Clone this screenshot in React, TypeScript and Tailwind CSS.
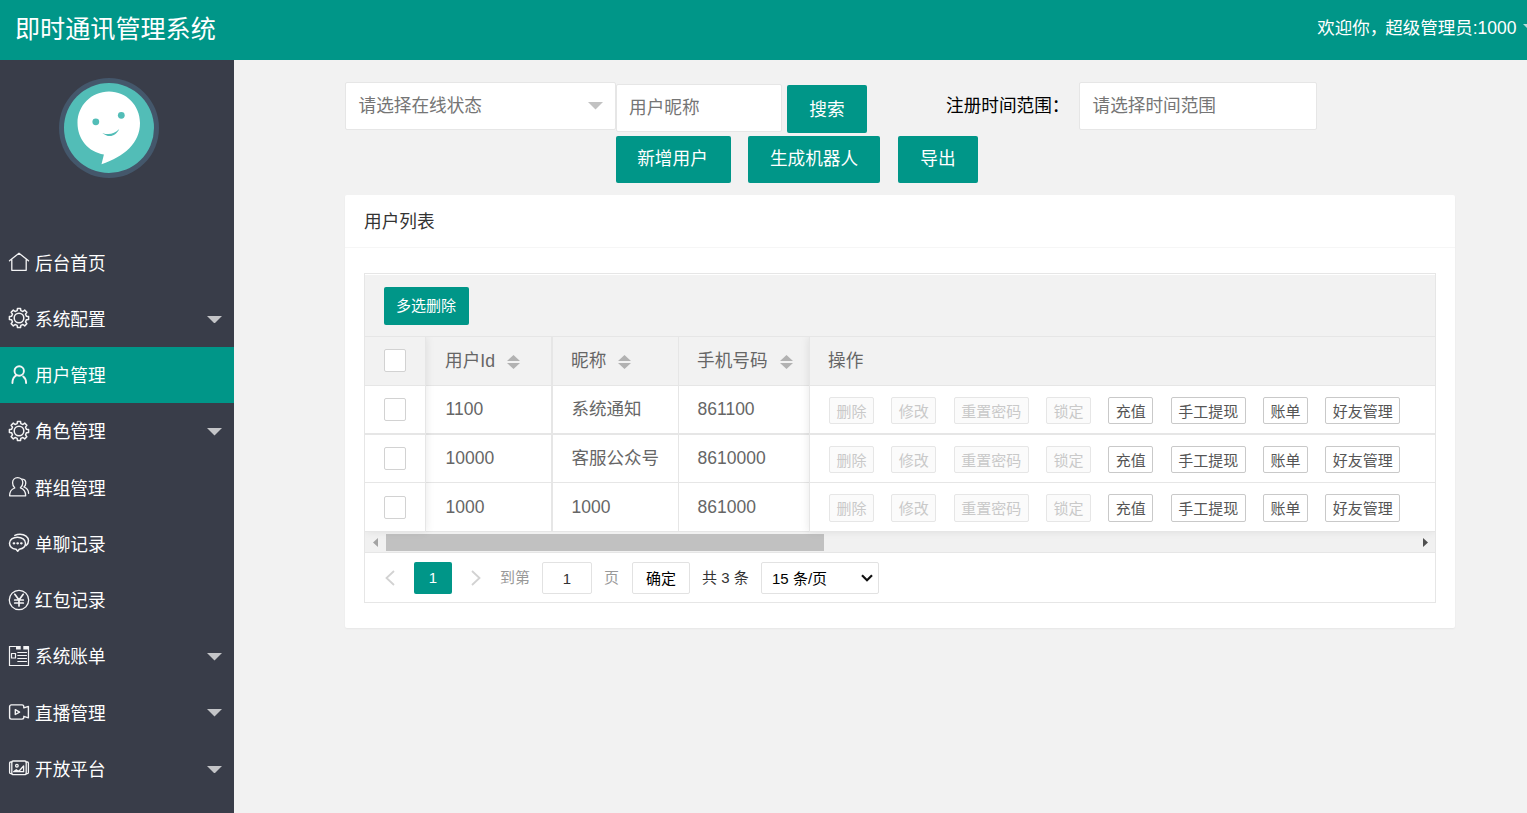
import type { ReactNode } from 'react';
import clsx from 'clsx';

// eight-tooth cog outline around (11, 11)
const gearPath = (() => {
  const points: string[] = [];
  for (let i = 0; i < 8; i++) {
    const steps: [number, number][] = [[-14, 7.6], [-9, 9.7], [9, 9.7], [14, 7.6]];
    steps.forEach(([offset, r]) => {
      const a = ((i * 45 + offset) * Math.PI) / 180;
      points.push(`${(11 + r * Math.sin(a)).toFixed(2)} ${(11 - r * Math.cos(a)).toFixed(2)}`);
    });
  }
  return `M${points.join('L')}Z`;
})();

function Icon({ children, width = 1.3 }: { children: ReactNode; width?: number }) {
  return (
    <svg
      viewBox="0 0 22 22"
      className="mb-px h-[22px] w-[22px] shrink-0"
      fill="none"
      stroke="#f4f4f5"
      strokeWidth={width}
      strokeLinejoin="round"
      strokeLinecap="round"
    >
      {children}
    </svg>
  );
}

const HomeIcon = () => (
  <Icon>
    <path d="M1.5 9.8 11 2.2l9.5 7.6M3.8 8.6v10.7h14.4V8.6" />
  </Icon>
);

const GearIcon = () => (
  <Icon width={1.5}>
    <path d={gearPath} />
    <circle cx="11" cy="11" r="4.8" />
  </Icon>
);

const UserIcon = () => (
  <Icon width={1.9}>
    <circle cx="11.2" cy="7" r="4.7" />
    <path d="M8.6 11.2C5.8 12.7 4.4 15.4 4.4 19M15.2 12.4c1.9 1.4 2.9 3.7 2.9 6.6" />
  </Icon>
);

const GroupIcon = () => (
  <Icon width={1.3}>
    <path d="M1.6 19.8c0-4 1.7-6.6 5.2-7.8C5.2 10.6 4.6 9 4.6 6.8c0-3 2-5.2 5-5.2s5.2 2.2 5.2 5.2c0 2.2-.8 3.8-2.4 5 3.4 1.2 5.3 3.8 5.3 8z" />
    <path d="M14.4 3.2c2.3.2 3.4 1.7 3.4 3.9 0 1.7-.7 3-1.9 3.9 2.8 1 4.6 3 4.7 6.3" />
  </Icon>
);

const ChatIcon = () => (
  <Icon width={1.5}>
    <path d="M9.5 5.2c4.500 0 8 2.600 8 6s-2.600 5.400-6.200 6l-1.600 2-1.600-2C4.200 16.700 1.500 14.400 1.500 11.200c0-3.400 3.500-6 8-6z" />
    <path d="M6.8 3.4c1.600-.8 3.400-1.200 5.200-1.200 4.800 0 8.500 2.800 8.500 6.400 0 2-.8 3.700-2.300 4.900" />
    <path d="M5.700 11.300h.5M9.400 11.300h.5M13.100 11.300h.5" strokeWidth="2.2" />
  </Icon>
);

const YenIcon = () => (
  <Icon width={1.3}>
    <circle cx="11" cy="11" r="9.7" />
    <path d="M6.8 5.3 11 11l4.2-5.7M11 11v6M6.7 11h8.6M6.7 14h8.6" strokeWidth="1.7" />
  </Icon>
);

const BillIcon = () => (
  <Icon width={1.2}>
    <path d="M7.500 1.500H1.500v19h19V1.500" strokeLinejoin="miter" />
    <path d="M8 2.800h4.700M15.300 2.800h5.200" strokeWidth="3.6" strokeLinecap="butt" />
    <path d="M3.500 8.500h4v4.500h-4zM9.800 7.500h8.700M9.800 10.500h8.700M9.800 13.500h8.700M9.800 16.500h8.700" />
  </Icon>
);

const VideoIcon = () => (
  <Icon width={1.4}>
    <path d="M15.8 6.500V5.700c0-1-.8-1.800-1.800-1.800H3.400c-1 0-1.800.8-1.800 1.800v10.600c0 1 .8 1.800 1.800 1.800H14c1 0 1.800-.8 1.800-1.800v-.6M15.800 6.900l4.600-1.500v11.400l-4.600-1.500" />
    <path d="M7.300 8.700v4.800l4.300-2.400z" />
  </Icon>
);

const PictureIcon = () => (
  <Icon width={1.3}>
    <path d="M3.900 5H2.600c-.6 0-1 .4-1 1v9.600c0 .6.400 1 1 1h1.300M18.100 5h1.300c.6 0 1 .4 1 1v9.600c0 .6-.4 1-1 1h-1.300" />
    <rect x="3.8" y="4" width="14.4" height="13.6" rx="1.2" />
    <circle cx="8.9" cy="8.7" r="1.3" />
    <path d="m5.600 14.700 2.700-2 2.400 1.800 4.900-5.500v5.700z" />
  </Icon>
);

type MenuItem = { label: string; icon: () => ReactNode; arrow?: boolean; active?: boolean };

const menu: MenuItem[] = [
  { label: '后台首页', icon: HomeIcon },
  { label: '系统配置', icon: GearIcon, arrow: true },
  { label: '用户管理', icon: UserIcon, active: true },
  { label: '角色管理', icon: GearIcon, arrow: true },
  { label: '群组管理', icon: GroupIcon },
  { label: '单聊记录', icon: ChatIcon },
  { label: '红包记录', icon: YenIcon },
  { label: '系统账单', icon: BillIcon, arrow: true },
  { label: '直播管理', icon: VideoIcon, arrow: true },
  { label: '开放平台', icon: PictureIcon, arrow: true },
];

const users = [
  { id: '1100', nickname: '系统通知', phone: '861100' },
  { id: '10000', nickname: '客服公众号', phone: '8610000' },
  { id: '1000', nickname: '1000', phone: '861000' },
];

// row heights and bottom rules differ by a pixel from row to row
const rowStyles = ['h-[49px] border-b-2', 'h-12 border-b', 'h-[49px] border-b'];

const actions = [
  { label: '删除', disabled: true },
  { label: '修改', disabled: true },
  { label: '重置密码', disabled: true },
  { label: '锁定', disabled: true },
  { label: '充值' },
  { label: '手工提现' },
  { label: '账单' },
  { label: '好友管理' },
];

function Caret({ className }: { className?: string }) {
  return (
    <svg viewBox="0 0 15 7.5" className={clsx('h-[7.5px] w-[15px] shrink-0', className)}>
      <path d="M0 0h15L7.5 7.5z" fill="currentColor" />
    </svg>
  );
}

function SortIcon() {
  return (
    <svg viewBox="0 0 13 14" className="mt-1 ml-3 h-3.5 w-[13px] shrink-0" fill="#b2b2b2">
      <path d="M6.5 0 13 6H0zM6.5 14 13 8H0z" />
    </svg>
  );
}

function Checkbox() {
  return <div className="h-[23px] w-[22px] rounded-[2px] border border-[#d2d2d2] bg-white" />;
}

function Button({ children, className }: { children: ReactNode; className?: string }) {
  return (
    <button className={clsx('flex shrink-0 items-center justify-center rounded-[2px] bg-[#009688] text-white', className)}>
      {children}
    </button>
  );
}

function Avatar() {
  return (
    <svg viewBox="0 0 100 100" className="h-[100px] w-[100px]">
      <circle cx="50" cy="50" r="50" fill="#44576b" />
      <circle cx="50" cy="50" r="45" fill="#52bdb7" />
      <path
        d="M50 13.5c17.500 0 31 14 31 31.500 0 20-15.500 33.500-38.500 41.300l2.400-9.800C29.500 74 18.500 61.500 18.500 45 18.500 27.500 32.500 13.500 50 13.500z"
        fill="#fff"
      />
      <circle cx="36.8" cy="43.8" r="3.4" fill="#52bdb7" />
      <circle cx="62.3" cy="37.3" r="3.4" fill="#52bdb7" />
      <path d="M43.3 54.9c6 2.4 12 1.3 16.9-3.9-3.6 8-11 8.9-16.9 3.9z" fill="#52bdb7" />
    </svg>
  );
}

function Sidebar() {
  return (
    <aside className="w-[234px] shrink-0 overflow-hidden bg-[#393d49] text-white">
      <div className="flex h-[174.6px] pt-[18px] pl-[59px]">
        <Avatar />
      </div>
      <nav>
        {menu.map(({ label, icon: ItemIcon, arrow, active }) => (
          <a
            key={label}
            className={clsx('flex h-[56.25px] items-center pr-3 pl-2', active && 'bg-[#009688]')}
          >
            <ItemIcon />
            <span className="ml-[5px] pt-0.5">{label}</span>
            {arrow && <Caret className="mt-px ml-auto text-[#c4c5c8]" />}
          </a>
        ))}
      </nav>
    </aside>
  );
}

function SearchForm() {
  return (
    <div className="flex h-[113px]">
      <div className="flex h-12 w-[271px] items-center justify-between rounded-[2px] border border-[#e6e6e6] bg-white pr-3 pl-[12.5px] text-[#757575]">
        <span className="pb-px">请选择在线状态</span>
        <Caret className="text-[#c2c2c2]" />
      </div>
      <div className="w-[330px] shrink-0">
        <div className="flex pt-0.5">
          <div className="flex h-12 w-[166px] items-center rounded-[2px] border border-[#e6e6e6] bg-white pl-3 text-[#757575]">
            用户昵称
          </div>
          <Button className="mt-px ml-[5px] h-12 w-20 pt-px">搜索</Button>
        </div>
        <div className="mt-[3px] flex">
          <Button className="h-[47px] w-[115px] pr-0.5 pb-px">新增用户</Button>
          <Button className="ml-[17px] h-[47px] w-[132px] pb-px">生成机器人</Button>
          <Button className="ml-[18px] h-[47px] w-20 pb-px">导出</Button>
        </div>
      </div>
      <div className="flex h-12 items-center">
        <span className="w-[133px] pb-px whitespace-nowrap text-black">注册时间范围：</span>
        <div className="flex h-12 w-[238px] items-center rounded-[2px] border border-[#e6e6e6] bg-white pb-px pl-[12.5px] text-[#757575]">
          请选择时间范围
        </div>
      </div>
    </div>
  );
}

function UserTable() {
  return (
    <div className="overflow-hidden">
      <div className="flex text-[#666]">
        <div className="relative z-10 w-[61px] shrink-0 border-r border-[#e6e6e6] bg-white shadow-[1px_0_8px_rgba(0,0,0,0.08)]">
          <div className="flex h-[49px] items-center border-b border-[#e6e6e6] bg-[#f2f2f2] pb-0.5 pl-[19px]">
            <Checkbox />
          </div>
          {users.map((user, i) => (
            <div key={user.id} className={clsx('flex items-center border-[#e6e6e6] pl-[19px]', rowStyles[i])}>
              <Checkbox />
            </div>
          ))}
        </div>

        <div className="w-[383px] shrink-0">
          <div className="flex h-[49px] border-b border-[#e6e6e6] bg-[#f2f2f2]">
            <div className="flex w-[127px] items-center border-r-2 border-[#e6e6e6] pb-0.5 pl-[19px]">
              <span className="pt-px">用户Id</span>
              <SortIcon />
            </div>
            <div className="flex w-[126px] items-center border-r border-[#e6e6e6] pb-0.5 pl-[18px]">
              <span className="pt-px">昵称</span>
              <SortIcon />
            </div>
            <div className="flex w-[130px] items-center pb-0.5 pl-[18px]">
              <span className="pt-px">手机号码</span>
              <SortIcon />
            </div>
          </div>
          {users.map((user, i) => (
            <div key={user.id} className={clsx('flex border-[#e6e6e6] text-[17.5px]', rowStyles[i])}>
              <div className="flex w-[127px] items-center border-r-2 border-[#e6e6e6] pb-px pl-[19.5px]">{user.id}</div>
              <div className="flex w-[126px] items-center border-r border-[#e6e6e6] pb-px pl-[18.5px]">{user.nickname}</div>
              <div className="flex w-[130px] items-center pb-px pl-[18.5px]">{user.phone}</div>
            </div>
          ))}
        </div>

        <div className="relative z-10 flex-1 border-l border-[#e6e6e6] bg-white shadow-[-1px_0_8px_rgba(0,0,0,0.08)]">
          <div className="flex h-[49px] items-center border-b border-[#e6e6e6] bg-[#f2f2f2] pb-px pl-[18px]">操作</div>
          {users.map((user, i) => (
            <div
              key={user.id}
              className={clsx('flex items-center gap-[17.34px] border-[#e6e6e6] pt-0.5 pl-[19px] text-[15px]', rowStyles[i])}
            >
              {actions.map(({ label, disabled }) => (
                <button
                  key={label}
                  className={clsx(
                    'flex h-[27.5px] shrink-0 items-center justify-center rounded-[2px] border pt-0.5',
                    label.length > 2 ? 'w-[75px]' : 'w-[45px]',
                    disabled ? 'border-[#e6e6e6] bg-[#fbfbfb] text-[#c9c9c9]' : 'border-[#c9c9c9] bg-white text-[#555]',
                  )}
                >
                  {label}
                </button>
              ))}
            </div>
          ))}
        </div>
      </div>

      {/* horizontal scrollbar */}
      <div className="flex h-5 items-start bg-[#f1f1f1]">
        <svg viewBox="0 0 21 20" className="h-5 w-[21px]">
          <path d="M13 6v9l-5-4.5z" fill="#a3a3a3" />
        </svg>
        <div className="mt-0.5 h-[17px] w-[438px] bg-[#c1c1c1]" />
        <svg viewBox="0 0 21 20" className="ml-auto h-5 w-[21px]">
          <path d="M9 6v9l5-4.5z" fill="#505050" />
        </svg>
      </div>
    </div>
  );
}

function Pagination() {
  return (
    <div className="flex h-[50px] items-center border-t border-[#e6e6e6] text-[15px] text-[#999]">
      <svg viewBox="0 0 10 16" className="ml-5 h-4 w-2.5" fill="none" stroke="#d2d2d2" strokeWidth="1.8">
        <path d="M9 1 1.5 8 9 15" />
      </svg>
      <div className="ml-[19px] flex h-8 w-[38px] items-center justify-center rounded-[2px] bg-[#009688] text-white">1</div>
      <svg viewBox="0 0 10 16" className="ml-[19px] h-4 w-2.5" fill="none" stroke="#d2d2d2" strokeWidth="1.8">
        <path d="m1 1 7.5 7L1 15" />
      </svg>
      <span className="ml-[19px]">到第</span>
      <div className="ml-3 flex h-8 w-[50px] items-center justify-center rounded-[2px] border border-[#e2e2e2] pt-0.5 text-[#333]">1</div>
      <span className="ml-3">页</span>
      <button className="ml-[13px] flex h-8 w-[58px] items-center justify-center rounded-[2px] border border-[#e2e2e2] pt-0.5 text-black">
        确定
      </button>
      <span className="ml-3 w-[47px] whitespace-nowrap text-[#333]">共 3 条</span>
      <div className="ml-3 flex h-8 w-[118px] items-center justify-between rounded-[2px] border border-[#e2e2e2] pr-[5px] pl-2.5 text-black">
        <span className="pt-0.5">15 条/页</span>
        <svg viewBox="0 0 12 8" className="mt-px h-2 w-3" fill="none" stroke="#111" strokeWidth="2.2">
          <path d="m1 1.2 5 5 5-5" />
        </svg>
      </div>
    </div>
  );
}

export default function App() {
  return (
    <div className="flex h-screen flex-col overflow-hidden bg-[#f2f2f2] font-['Liberation_Sans','Noto_Sans_CJK_SC',sans-serif] text-[17.65px] leading-6">
      <header className="flex h-[60px] shrink-0 items-center overflow-hidden bg-[#009688] pb-1 pl-[15px] text-white">
        <h1 className="pt-px text-[25.1px] leading-8">即时通讯管理系统</h1>
        <div className="-mr-[10.5px] ml-auto flex items-center text-[17.5px] whitespace-nowrap">
          <span className="-mr-0.5">欢迎你，</span>
          <span>超级管理员:1000</span>
          <Caret className="ml-1.5 text-[#b2dfdb]" />
        </div>
      </header>

      <div className="flex min-h-0 flex-1">
        <Sidebar />
        <main className="min-w-0 flex-1 pt-[22px] pr-[72px] pl-[111px]">
          <SearchForm />
          <section className="h-[433px] rounded-[2px] bg-white shadow-[0_1px_2px_rgba(0,0,0,0.05)]">
            <h2 className="flex h-[53px] items-center border-b border-[#f6f6f6] pt-px pl-[19px] text-[#333]">用户列表</h2>
            <div className="mx-[19px] mt-[25px] border border-[#e6e6e6]">
              <div className="mt-px flex h-[62px] items-center border-b border-[#e6e6e6] bg-[#f2f2f2] pl-[19px]">
                <Button className="h-[38px] w-[85px] pr-px text-[15px]">多选删除</Button>
              </div>
              <UserTable />
              <Pagination />
            </div>
          </section>
        </main>
      </div>
    </div>
  );
}
